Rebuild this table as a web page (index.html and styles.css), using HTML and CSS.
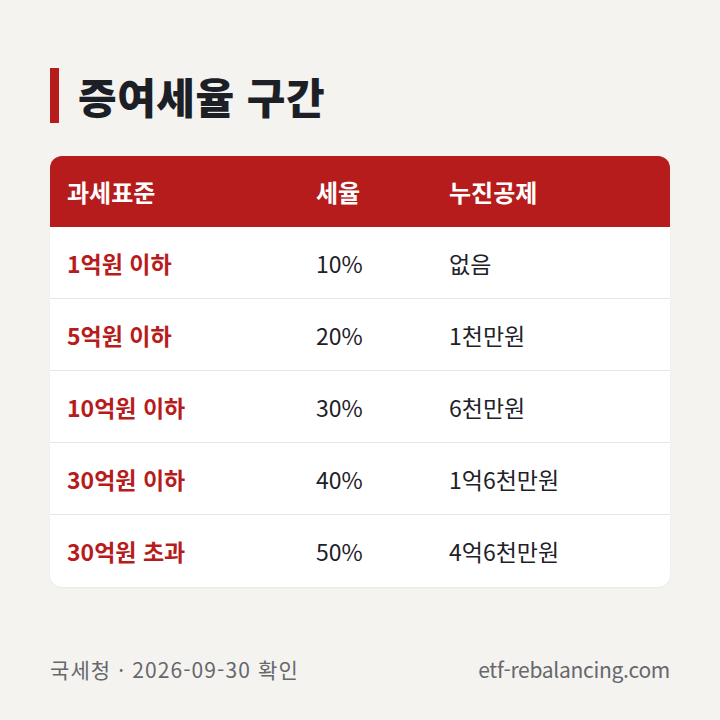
FILE: index.html
```html
<!DOCTYPE html>
<html lang="ko">
<head>
<meta charset="utf-8">
<link rel="stylesheet" href="styles.css">
</head>
<body>
<div class="page">
  <h1 class="title">증여세율 구간</h1>
  <div class="card">
    <div class="row head">
      <div class="c1">과세표준</div>
      <div class="c2">세율</div>
      <div class="c3">누진공제</div>
    </div>
    <div class="row">
      <div class="c1 label">1억원 이하</div>
      <div class="c2">10%</div>
      <div class="c3">없음</div>
    </div>
    <div class="row">
      <div class="c1 label">5억원 이하</div>
      <div class="c2">20%</div>
      <div class="c3">1천만원</div>
    </div>
    <div class="row">
      <div class="c1 label">10억원 이하</div>
      <div class="c2">30%</div>
      <div class="c3">6천만원</div>
    </div>
    <div class="row">
      <div class="c1 label">30억원 이하</div>
      <div class="c2">40%</div>
      <div class="c3">1억6천만원</div>
    </div>
    <div class="row last">
      <div class="c1 label">30억원 초과</div>
      <div class="c2">50%</div>
      <div class="c3">4억6천만원</div>
    </div>
  </div>
  <div class="footer">
    <span class="source">국세청 · 2026-09-30 확인</span>
    <span class="site">etf-rebalancing.com</span>
  </div>
</div>
</body>
</html>
```
FILE: styles.css
```css
* { box-sizing: border-box; }
html, body { margin: 0; padding: 0; }
body {
  background: #f4f3f0;
  font-family: "Noto Sans CJK KR", "Noto Sans", sans-serif;
  color: #1e2128;
}
.page {
  width: 720px;
  height: 720px;
  padding: 68px 50px 0 50px;
  display: flex;
  flex-direction: column;
}
.title {
  margin: 0;
  border-left: 9px solid #b71c1c;
  padding-left: 19px;
  height: 55px;
  display: flex;
  align-items: center;
  font-size: 42px;
  font-weight: 900;
  color: #1c1f26;
  letter-spacing: 0.5px;
}
.card {
  margin-top: 33px;
  background: #fff;
  border-radius: 12px;
  overflow: hidden;
  box-shadow: 0 1px 2px rgba(0,0,0,0.05);
}
.row {
  display: grid;
  grid-template-columns: 249px 133px 1fr;
  align-items: center;
  height: 72px;
  padding-left: 17px;
  font-size: 23px;
  border-bottom: 1px solid #e8e6e3;
  color: #1e2128;
}
.row.last { border-bottom: none; }
.row.head {
  background: #b71c1c;
  color: #fff;
  font-weight: 700;
  font-size: 24px;
  height: 71px;
  border-bottom: none;
}
.label {
  color: #b71c1c;
  font-weight: 700;
}
.footer {
  margin-top: auto;
  margin-bottom: 36px;
  display: flex;
  justify-content: space-between;
  align-items: center;
  font-size: 21px;
  color: #67676c;
}
.source { letter-spacing: 1.1px; }
.site { letter-spacing: -0.3px; }
```
